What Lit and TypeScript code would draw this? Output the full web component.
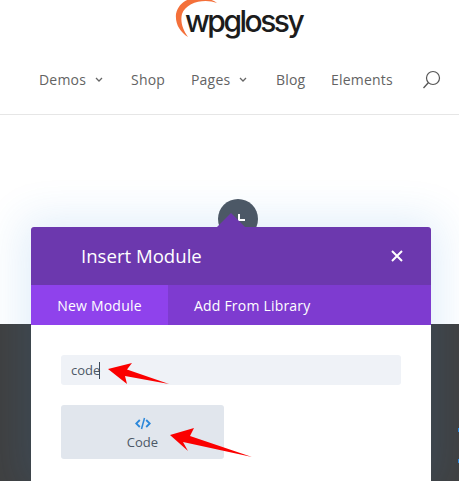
import { LitElement, html, css } from "lit";
import { customElement } from "lit/decorators.js";

@customElement("app-root")
export class AppRoot extends LitElement {
  static styles = css`
    :host { display: block; width: 459px; height: 481px; position: relative; overflow: hidden; background: #fff; font-family: "Open Sans", "Noto Sans", sans-serif; }
    .header { height: 114px; border-bottom: 1px solid #e6e6e6; box-sizing: content-box; display: flex; flex-direction: column; align-items: center; }
    .logo { height: 59px; width: 100%; display: flex; justify-content: flex-start; position: relative; padding-left: 185px; box-sizing: border-box; }
    .logo-text { position: relative; font-family: "Inter", sans-serif; font-size: 30px; font-weight: 500; letter-spacing: -2.5px; color: #1c1c1c; line-height: 40px; margin-top: 1px; }
    .arc { position: absolute; left: 170px; top: 0; }
    .nav { display: flex; align-items: center; width: 100%; padding-left: 39px; box-sizing: border-box; height: 40px; font-size: 14px; font-weight: 500; letter-spacing: 0.2px; color: #636363; }
    .nav span.item { display: flex; align-items: center; }
    .chev { margin-left: 9px; margin-top: 1px; }
    .i1 { width: 92px; } .i2 { width: 60px; } .i3 { width: 85px; } .i4 { width: 55px; } .i5 { width: 91px; }
    .gap { height: 209px; }
    .dark { height: 157px; background: #404040; }
    .glow { position: absolute; left: 31px; top: 227px; width: 400px; height: 254px; box-shadow: 0 0 40px 8px rgba(43,135,218,0.14); }
    .bubble { position: absolute; left: 218px; top: 199px; width: 40px; height: 40px; border-radius: 50%; background: #4c5866; }
    .plus { position: absolute; left: 236px; top: 214px; width: 9px; height: 9px; }
    .modal { position: absolute; left: 31px; top: 227px; width: 400px; height: 254px; background: #fff; border-radius: 3px 3px 0 0; display: flex; flex-direction: column; }
    .caret { position: absolute; left: 186px; top: -14px; width: 0; height: 0; border: 14px solid transparent; border-top: 0; border-bottom-color: #6c38ae; }
    .title { height: 58px; background: #6c38ae; border-radius: 3px 3px 0 0; color: #fff; display: flex; align-items: center; justify-content: space-between; padding: 0 28px 0 50px; font-size: 18.6px; font-weight: 500; }
    .title span { margin-top: -2px; }
    .tabs { height: 40px; background: #7e3bd0; display: flex; color: #fff; font-size: 14px; font-weight: 500; letter-spacing: 0.2px; }
    .tab { display: flex; align-items: center; justify-content: center; }
    .tab.active { width: 137px; background: #8f42ec; }
    .tab.other { padding-left: 26px; }
    .body { padding: 30px 30px 0; display: flex; flex-direction: column; gap: 20px; }
    .input { height: 30px; background: #eff2f7; border-radius: 3px; display: flex; align-items: center; padding-left: 10px; font-size: 13px; color: #4c5866; }
    .cursor { width: 1px; height: 17px; background: #3c4a5a; margin-left: -1px; }
    .card { width: 163px; height: 54px; background: #e1e6ed; border-radius: 3px; display: flex; flex-direction: column; align-items: center; padding-top: 12px; box-sizing: border-box; color: #4c5866; font-size: 13px; font-weight: 500; line-height: 18px; }
    .card svg { display: block; margin-bottom: 3px; }
    .arrows { position: absolute; left: 0; top: 0; }
    .speck { position: absolute; left: 458px; width: 1px; height: 4px; background: #2b87da; }
  `;

  render() {
    const chev = html`<svg class="chev" width="8" height="6" viewBox="0 0 8 6"><path d="M1 1l3 3 3-3" fill="none" stroke="#666" stroke-width="1.300"/></svg>`;
    return html`
      <div class="header">
        <div class="logo">
          <svg class="arc" width="60" height="40" viewBox="170 0 60 40"><path d="M217 3C205-6 180-5 176 14C175 24 180 32 188 37C183 30 180 22 182 14C186 2 205-2 217 3z" fill="#f4703a"/></svg>
          <span class="logo-text">wpglossy</span>
        </div>
        <nav class="nav">
          <span class="item i1">Demos${chev}</span>
          <span class="item i2">Shop</span>
          <span class="item i3">Pages${chev}</span>
          <span class="item i4">Blog</span>
          <span class="item i5">Elements</span>
          <svg width="19" height="19" viewBox="0 0 19 19"><circle cx="11" cy="8" r="6.500" fill="none" stroke="#555" stroke-width="1.200"/><path d="M6.500 12.500L1.500 18" stroke="#555" stroke-width="1.300" fill="none"/></svg>
        </nav>
      </div>
      <div class="gap"></div>
      <div class="dark"></div>
      <div class="speck" style="top:428px"></div>
      <div class="speck" style="top:459px"></div>
      <div class="glow"></div>
      <div class="bubble"></div>
      <svg class="plus" viewBox="0 0 9 9"><path d="M3 0v6h6" fill="none" stroke="#fff" stroke-width="2"/></svg>
      <div class="modal">
        <div class="caret"></div>
        <div class="title"><span>Insert Module</span>
          <svg width="12" height="12" viewBox="0 0 12 12"><path d="M1 1l10 10M11 1L1 11" stroke="#fff" stroke-width="2"/></svg>
        </div>
        <div class="tabs"><div class="tab active">New Module</div><div class="tab other">Add From Library</div></div>
        <div class="body">
          <div class="input">code<span class="cursor"></span></div>
          <div class="card">
            <svg width="16" height="13" viewBox="0 0 16 13"><path d="M4.800 3L1.200 6.500 4.800 10M11.200 3L14.800 6.500 11.200 10" fill="none" stroke="#2b87da" stroke-width="1.800"/><path d="M9.500 1L6.500 12" stroke="#2b87da" stroke-width="1.500"/></svg>
            Code
          </div>
        </div>
      </div>
      <svg class="arrows" width="459" height="481" viewBox="0 0 459 481">
        <path d="M108 369L132 363 127 369.500 169 384 125 376 127 384z" fill="#fb0000"/>
        <path d="M170 435L194 428 190 436 252 457 183 442 188 451z" fill="#fb0000"/>
      </svg>
    `;
  }
}
